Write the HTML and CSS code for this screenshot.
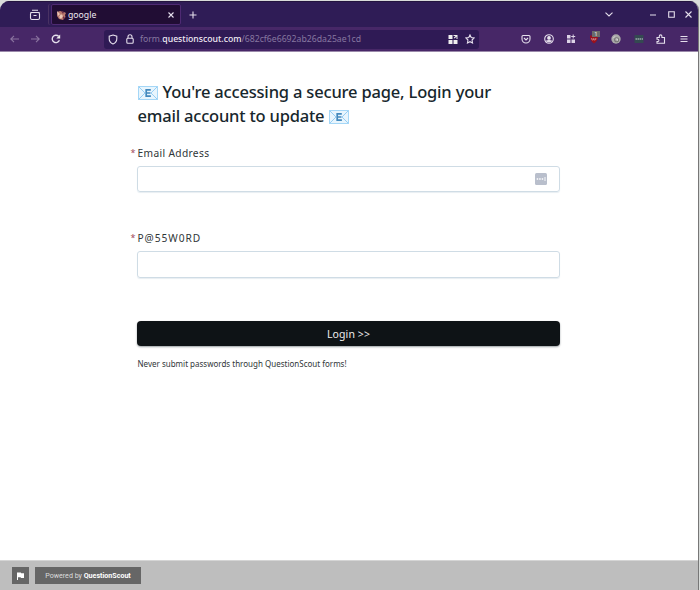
FILE: index.html
```html
<!DOCTYPE html>
<html lang="en">
<head>
<meta charset="utf-8">
<title>google</title>
<link rel="stylesheet" href="styles.css">
</head>
<body>
<svg width="0" height="0" class="defs">
  <symbol id="mail" viewBox="0 0 20 14">
    <rect x=".5" y=".5" width="19" height="13" fill="#e8f5fd" stroke="#a5d7f7"/>
    <path d="M1 1l6 6L1 13M19 1l-6 6L19 13" fill="none" stroke="#8ccaf3" stroke-width=".9"/>
    <path d="M12.800 3.900H8.200v6.200h4.700M8.500 7h4" fill="none" stroke="#4389bd" stroke-width="1.700"/>
  </symbol>
</svg>
<div class="window">
  <header class="tabs">
    <svg class="history" width="12" height="12" viewBox="0 0 12 12"><path d="M3 1.300h6M1.500 3.500h9" /><rect x="1.500" y="3.500" width="9" height="7" rx="1.500"/><path d="M4.500 6.500h3"/></svg>
    <div class="tab">
      <svg width="10" height="10" viewBox="0 0 10 10"><path d="M1 2l3-1 4 1 2 1-1 2 .5 2L7 10 3 9 1 6z" fill="#b7786c" stroke="none"/><path d="M1 1l3 3-2 2zM5 4l2 2-2 3-2-2z" fill="#e9c8b6" stroke="none"/><path d="M5 1l3 1-1 2zM7 6l2 2-2 1z" fill="#6b2e4a" stroke="none"/></svg>
      <span class="tab-title">google</span>
      <svg class="close" width="6" height="6" viewBox="0 0 6 6"><path d="M.5.5l5 5M5.500.5l-5 5"/></svg>
    </div>
    <svg class="plus" width="8" height="8" viewBox="0 0 8 8"><path d="M4 .5v7M.5 4h7"/></svg>
    <div class="controls">
      <svg class="chevron" width="8" height="5" viewBox="0 0 8 5"><path d="M.5.7L4 4 7.500.7"/></svg>
      <svg class="min" width="6" height="6" viewBox="0 0 6 6"><path d="M0 3h6"/></svg>
      <svg class="max" width="7" height="7" viewBox="0 0 7 7"><path d="M.7.700h5.600v5.600H.7z"/></svg>
      <svg width="7" height="7" viewBox="0 0 7 7"><path d="M.5.5l6 6M6.500.5l-6 6"/></svg>
    </div>
  </header>
  <div class="toolbar">
    <svg class="dim" width="9" height="8" viewBox="0 0 9 8"><path d="M9 4H1M4 .8L.8 4 4 7.200"/></svg>
    <svg class="dim forward" width="9" height="8" viewBox="0 0 9 8"><path d="M0 4h8M5 .8L8.200 4 5 7.200"/></svg>
    <svg class="reload" width="10" height="10" viewBox="0 0 10 10"><path d="M8.400 6.200A3.700 3.700 0 1 1 7.600 2.300"/><path d="M9.200.6v3.900H5.300z" fill="#eee" stroke="none"/></svg>
    <div class="address">
      <svg width="10" height="11" viewBox="0 0 10 11"><path d="M5 1l3.800 1.200v2.600C8.800 7.400 7 9.200 5 10 3 9.200 1.200 7.400 1.200 4.800V2.200z"/></svg>
      <svg class="lock" width="8" height="10" viewBox="0 0 8 10"><rect x=".8" y="4.300" width="6.400" height="4.900" rx="1"/><path d="M2 4V2.700a2 2 0 0 1 4 0V4"/></svg>
      <span class="url">form.<b>questionscout.com</b>/682cf6e6692ab26da25ae1cd</span>
      <svg class="grid" width="10" height="9" viewBox="0 0 10 9"><path d="M.5 0h4v4h-4zM.5 5h4v4h-4zM5.500 5h4v4h-4zM5.500 0h4v4h-1V1.700L6.500 3.500l-.7-.7L7.600 1H5.500z" fill="#eee" stroke="none"/></svg>
      <svg class="star" width="10" height="10" viewBox="0 0 10 10"><path d="M5 .9l1.250 2.600 2.850.4L7.050 6l.5 3L5 7.650 2.450 9l.5-3L.9 3.900l2.850-.4z"/></svg>
    </div>
    <div class="extensions">
      <svg width="10" height="10" viewBox="0 0 10 10"><path d="M2 1.500h6q1 0 1 1V5A4 4 0 0 1 1 5V2.500q0-1 1-1zM3 4l2 2 2-2"/></svg>
      <svg width="10" height="10" viewBox="0 0 10 10"><circle cx="5" cy="5" r="4.300"/><circle cx="5" cy="3.900" r="1.300" fill="#eee"/><path d="M2.500 7q2.500-1 5 0L5 8z" fill="#eee"/></svg>
      <svg width="10" height="10" viewBox="0 0 10 10"><path d="M1 1h3.500v3.500H1zM1 5.500h3.500V9H1zM5.500 5.500H9V9H5.500zM6.700 .5h1v1.500h1.500v1H7.700v1.500h-1V3H5.200V2h1.500z" fill="#dcd3e6" stroke="none"/></svg>
      <span class="blocker"><svg width="10" height="10" viewBox="0 0 10 10"><path d="M5 .4Q7 1.600 9 1.600q.3 5.500-4 8Q.7 7.100 1 1.600 3 1.600 5 .4z" fill="#9c101b" stroke="none"/><path d="M2.800 4v1.500q1 1 2 0V4M4.800 5.500q1 1 2 0V4" stroke="#d3a8ac" stroke-width=".8"/></svg><span class="count">1</span></span>
      <svg width="10" height="10" viewBox="0 0 10 10"><circle cx="5" cy="5" r="4.700" fill="#aaa9a9" stroke="none"/><circle cx="5.600" cy="5.700" r="2" stroke="#777"/><path d="M2 4.300l2-2M4.800 5h1.700v1.700" stroke="#dedede" stroke-width=".8"/></svg>
      <svg width="10" height="10" viewBox="0 0 10 10"><path d="M.5 1h9v8h-9z" fill="#344951" stroke="none"/><path d="M1.500 5H7" stroke="#ccd6d4" stroke-dasharray="1.500 .5"/><path d="M8.200 4v2" stroke="#ccd6d4" stroke-width=".7"/></svg>
      <svg width="10" height="10" viewBox="0 0 10 10"><path d="M1 3.500h2.300V2.200a1.300 1.300 0 0 1 2.600 0v1.300H8.500v5.800H1V7.500h.8a1.100 1.100 0 0 0 0-2.200H1z"/></svg>
      <svg width="10" height="10" viewBox="0 0 10 10"><path d="M1.500 2.500h7M1.500 5h7M1.500 7.500h7"/></svg>
    </div>
  </div>
  <main class="page">
    <div class="content">
      <h1><svg class="mail" width="20" height="14"><use href="#mail"/></svg><span class="line-one">You're accessing a secure page, Login your</span><br><span class="line-two">email account to update</span><svg class="mail end" width="20" height="14"><use href="#mail"/></svg></h1>
      <div class="label"><i>*</i><span>Email Address</span></div>
      <div class="field">
        <svg width="12" height="12" viewBox="0 0 12 12"><rect width="12" height="12" rx="1.500" fill="#b9bfcc"/><path d="M1.700 6h1.500M4.200 6h1.500M6.700 6h1.500" stroke="#fff" stroke-width="1.500"/><path d="M10 4v4" stroke="#fff" stroke-width=".9"/></svg>
      </div>
      <div class="label second"><i>*</i><span>P@55W0RD</span></div>
      <div class="field tall"></div>
      <div class="submit"><span>Login &gt;&gt;</span></div>
      <p>Never submit passwords through QuestionScout forms!</p>
    </div>
  </main>
  <footer>
    <div class="flag"><svg width="7" height="8" viewBox="0 0 7 8"><path d="M0 .5h3.800l.4.800H7V6H4l-.4-.8H1V8H0z" fill="#fff"/></svg></div>
    <div class="powered">Powered by <b>QuestionScout</b></div>
  </footer>
</div>
</body>
</html>
```
FILE: styles.css
```css
* { box-sizing: border-box; }
body { margin: 0; background: #d9dcda; overflow: hidden; }
.defs { display: none; }
.window {
  width: 699px;
  height: 589px;
  margin-top: 1px;
  display: flex;
  flex-direction: column;
  border-right: 1px solid #777;
  border-radius: 9px 9px 0 0;
  background: #fff;
  overflow: hidden;
}
svg { display: block; flex: none; }
.tabs svg, .toolbar svg { fill: none; stroke: #e5dfec; stroke-width: 1.1; }
.tabs {
  height: 26px;
  display: flex;
  align-items: center;
  padding-left: 29px;
  background: #2f1c56;
  border-top: 1px solid #24143f;
}
.tabs .history { margin-right: 7px; }
.tab {
  width: 130px;
  height: 21px;
  margin-left: 3px;
  padding: 0 6px 0 4px;
  display: flex;
  align-items: center;
  background: #210d34;
  border: 1px solid #4e2a73;
  border-radius: 2px;
  box-shadow: -2px 0 #2f1c56, -3px 0 #493263;
}
.tab-title {
  flex: 1;
  margin-left: 2px;
  color: #eee8f1;
  font: 8.7px/20px "Noto Sans", sans-serif;
}
.tabs .plus { margin-left: 8px; }
.controls { margin-left: auto; margin-right: 6px; display: flex; align-items: center; }
.controls .chevron { margin-right: 37px; }
.controls .min { margin-right: 12px; stroke-width: 1; }
.controls .max { margin-right: 10px; }
.toolbar {
  height: 25px;
  flex: none;
  display: flex;
  align-items: center;
  padding: 0 9px 0 10px;
  background: #472767;
  border-bottom: 1px solid #9a89aa;
}
.toolbar .dim { stroke: #8b75a0; }
.toolbar .forward { margin-left: 12px; }
.toolbar .reload { margin-left: 11px; stroke-width: 1.4; }
.address {
  width: 376px;
  height: 19px;
  margin-left: 43px;
  padding: 0 4px;
  display: flex;
  align-items: center;
  background: #2f1a55;
  border-radius: 3px;
}
.address .lock { margin: 0 6px 0 8px; }
.url {
  flex: 1;
  white-space: nowrap;
  color: #8777a0;
  font: 8.7px/18px "Noto Sans", sans-serif;
}
.url b { color: #eee9f3; font-weight: 500; }
.address .grid { margin-right: 7px; }
.extensions {
  width: 168px;
  margin-left: 42px;
  display: flex;
  justify-content: space-between;
}
.blocker { position: relative; }
.count {
  position: absolute;
  left: 3px;
  top: -3px;
  width: 8px;
  height: 6px;
  background: #6b6b6b;
  color: #eee;
  font: 6px/6px "Noto Sans", sans-serif;
  text-align: center;
}
.page { flex: 1; padding-top: 28px; }
.content {
  width: 423px;
  margin-left: 137px;
  color: #303638;
  font-family: "Noto Sans", sans-serif;
}
h1 {
  height: 48px;
  margin: 0;
  padding-left: .5px;
  white-space: nowrap;
  color: #17272d;
  font: 500 16.500px/24px "Noto Sans", sans-serif;
}
.line-one { letter-spacing: -.18px; }
.line-two { letter-spacing: -.2px; }
.mail { display: inline-block; vertical-align: -2px; margin-right: 5px; }
.mail.end { margin: 0 0 0 5px; }
.label {
  position: relative;
  height: 16px;
  margin-top: 17px;
  padding-left: .5px;
  font-size: 10.200px;
  line-height: 16px;
  letter-spacing: .35px;
}
.label i { position: absolute; left: -6.500px; top: 0; color: #a34a58; font-style: normal; font-size: 9px; }
.field {
  height: 26px;
  margin-top: 5px;
  padding-right: 12px;
  display: flex;
  align-items: center;
  justify-content: flex-end;
  border: 1px solid #cfdce5;
  border-radius: 3px;
  box-shadow: 0 1px 1px #e8eef2;
}
.label.second { margin-top: 38px; letter-spacing: .95px; }
.field.tall { height: 27px; }
.submit {
  height: 25px;
  margin-top: 43px;
  border-radius: 4px;
  background: #0e1316;
  color: #eee;
  font-size: 10.500px;
  line-height: 26px;
  letter-spacing: .1px;
  text-align: center;
  box-shadow: 0 1px 2px #9aa0a3;
}
p { margin: 11px 0 0; padding-left: .5px; color: #303638; font-size: 8px; line-height: 14px; white-space: nowrap; }
footer {
  height: 30px;
  display: flex;
  padding: 6px 12px;
  background: #bebebe;
  border-top: 1px solid #d5d5d5;
  gap: 6px;
}
.flag, .powered { height: 17px; background: #666; }
.flag { width: 17px; display: flex; align-items: center; justify-content: center; }
.powered {
  width: 106px;
  color: #ddd;
  font: 7.100px/18px Roboto, sans-serif;
  text-align: center;
  white-space: nowrap;
}
.powered b { color: #fff; }
```
